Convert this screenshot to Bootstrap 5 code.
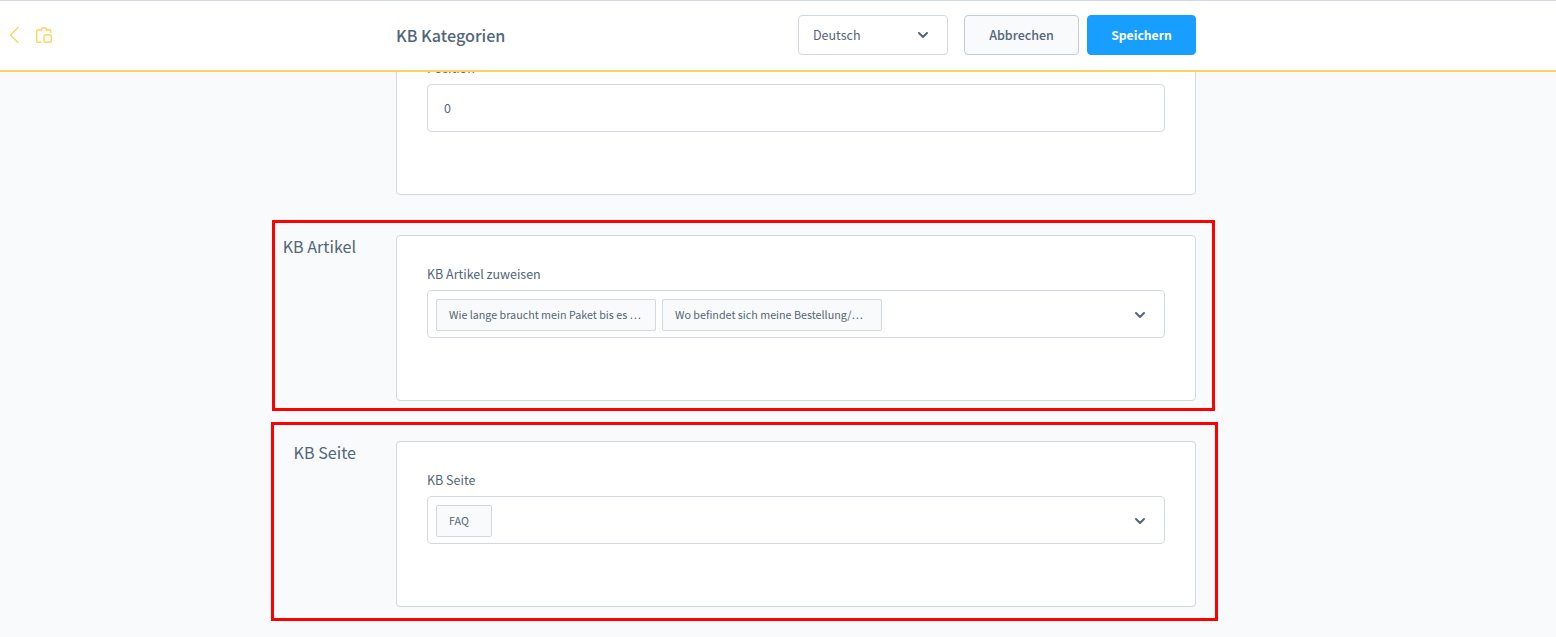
<!DOCTYPE html>
<html lang="de">
<head>
    <meta charset="UTF-8">
    <meta name="viewport" content="width=device-width, initial-scale=1.0">
    <title>KB Kategorien</title>
    <link rel="stylesheet" href="https://cdn.jsdelivr.net/npm/bootstrap@5.3.3/dist/css/bootstrap.min.css">
    <style>
        body {
            background-color: #f9fafb;
            color: #52667a;
            font-family: "Noto Sans CJK SC", "Open Sans", sans-serif;
            font-size: 12.5px;
            line-height: 20px;
            overflow: hidden;
        }
        svg {
            display: block;
            fill: none;
        }
        .page-header {
            height: 72px;
            padding-bottom: 1px;
            border-top: 1px solid #d1d9e0;
            border-bottom: 2px solid #ffd25e;
        }
        .header-side {
            width: 396px;
            padding-left: 9px;
            gap: 17px;
        }
        .header-main {
            width: 800px;
        }
        .page-title {
            font-size: 16.15px;
            font-weight: 500;
            line-height: 24px;
        }
        .language-select {
            width: 150px;
            height: 40px;
            padding: 0 18px 0 14px;
            border: 1px solid #d1d9e0;
        }
        .header-btn {
            height: 40px;
            padding: 0;
            font-size: 12.5px;
            font-weight: 500;
            line-height: 20px;
        }
        .btn-cancel {
            width: 115px;
            color: #52667a;
            background-color: #f9fafb;
            border-color: #c2ccd6;
        }
        .btn-save {
            width: 109px;
            color: #fff;
            background-color: #189eff;
            border-color: #189eff;
            font-size: 12.2px;
            font-weight: 700;
        }
        .page-content {
            padding-top: 29px;
        }
        .section-first {
            margin-left: 396px;
        }
        .section-marked {
            border: 3px solid #f00;
        }
        .section-article {
            width: 943px;
            height: 191px;
            margin: 25px 0 0 272px;
            padding-top: 12px;
        }
        .section-page {
            width: 947px;
            height: 199px;
            margin: 11px 0 0 271px;
            padding-top: 16px;
        }
        .section-title {
            width: 81px;
            margin-right: 40px;
            font-size: 16.15px;
            line-height: 22px;
        }
        .section-page .section-title {
            width: 82px;
        }
        .form-card {
            width: 800px;
            height: 166px;
            padding: 28px 30px 0;
            border-color: #d1d9e0;
            border-radius: 4px;
            color: inherit;
        }
        .field-label {
            margin-bottom: 6px;
            line-height: 20px;
        }
        .field-box {
            height: 48px;
            padding: 2px 18px 0 8px;
            border: 1px solid #d1d9e0;
            border-radius: 4px;
        }
        .field-number {
            padding: 0 16px 2px;
            font-size: 12.5px;
            color: #52667a;
        }
        .tag-list {
            gap: 6px;
        }
        .tag-item {
            height: 32px;
            padding: 0 12px;
            border: 1px solid #d1d9e0;
            border-radius: 2px;
            background-color: #f9fafb;
            font-size: 10.74px;
            line-height: 29.5px;
        }
        .tag-long {
            width: 220px;
        }
        .tag-short {
            width: 56px;
        }
    </style>
</head>
<body>

<header class="page-header fixed-top bg-white d-flex align-items-center">
    <div class="header-side d-flex align-items-center">
        <svg width="10" height="18" viewBox="0 0 10 18" stroke="#ffd25e" stroke-width="1.3" stroke-linecap="round" stroke-linejoin="round">
            <path d="M9 1.5 1.5 9 9 16.5"/>
        </svg>
        <svg width="16" height="16" viewBox="0 0 16 16" stroke="#ffd25e" stroke-width="1.4" stroke-linecap="round" stroke-linejoin="round">
            <path d="M5 15.3H2.2C1.3 15.3.7 14.7.7 13.8V4.2C.7 3.3 1.3 2.7 2.2 2.7H4.2"/>
            <path d="M11.500 2.700H13.400C14.300 2.700 14.900 3.300 14.900 4.200V5.500"/>
            <path d="M5.200 3.900V2.700C5.200 1.500 6.400.7 7.900.7S10.600 1.500 10.600 2.700V3.900"/>
            <rect x="8" y="8" width="7.300" height="7.300" rx="1.200"/>
        </svg>
    </div>
    <div class="header-main d-flex align-items-center">
        <div class="page-title me-auto">KB Kategorien</div>
        <div class="language-select rounded-1 d-flex align-items-center justify-content-between me-3">
            <span>Deutsch</span>
            <svg width="12" height="8" viewBox="0 0 12 8" stroke="#52667a" stroke-width="2" stroke-linecap="round" stroke-linejoin="round">
                <path d="M2 2 6 6 10 2"/>
            </svg>
        </div>
        <button type="button" class="btn btn-cancel header-btn rounded-1 me-2">Abbrechen</button>
        <button type="button" class="btn btn-save header-btn rounded-1">Speichern</button>
    </div>
</header>

<main class="page-content">
    <section class="section-first">
        <div class="card form-card">
            <label class="field-label" for="position">Position</label>
            <input type="text" class="form-control field-box field-number" id="position" value="0">
        </div>
    </section>

    <section class="section-marked section-article d-flex align-items-start">
        <div class="section-title text-end text-nowrap">KB Artikel</div>
        <div class="card form-card flex-shrink-0">
            <div class="field-label">KB Artikel zuweisen</div>
            <div class="field-box d-flex align-items-center">
                <div class="tag-list d-flex me-auto">
                    <span class="tag-item tag-long text-nowrap">Wie lange braucht mein Paket bis es …</span>
                    <span class="tag-item tag-long text-nowrap">Wo befindet sich meine Bestellung/…</span>
                </div>
                <svg width="12" height="8" viewBox="0 0 12 8" stroke="#52667a" stroke-width="2" stroke-linecap="round" stroke-linejoin="round">
                    <path d="M2 2 6 6 10 2"/>
                </svg>
            </div>
        </div>
    </section>

    <section class="section-marked section-page d-flex align-items-start">
        <div class="section-title text-end text-nowrap">KB Seite</div>
        <div class="card form-card flex-shrink-0">
            <div class="field-label">KB Seite</div>
            <div class="field-box d-flex align-items-center">
                <div class="tag-list d-flex me-auto">
                    <span class="tag-item tag-short">FAQ</span>
                </div>
                <svg width="12" height="8" viewBox="0 0 12 8" stroke="#52667a" stroke-width="2" stroke-linecap="round" stroke-linejoin="round">
                    <path d="M2 2 6 6 10 2"/>
                </svg>
            </div>
        </div>
    </section>
</main>

<script src="https://cdn.jsdelivr.net/npm/bootstrap@5.3.3/dist/js/bootstrap.bundle.min.js"></script>
</body>
</html>
